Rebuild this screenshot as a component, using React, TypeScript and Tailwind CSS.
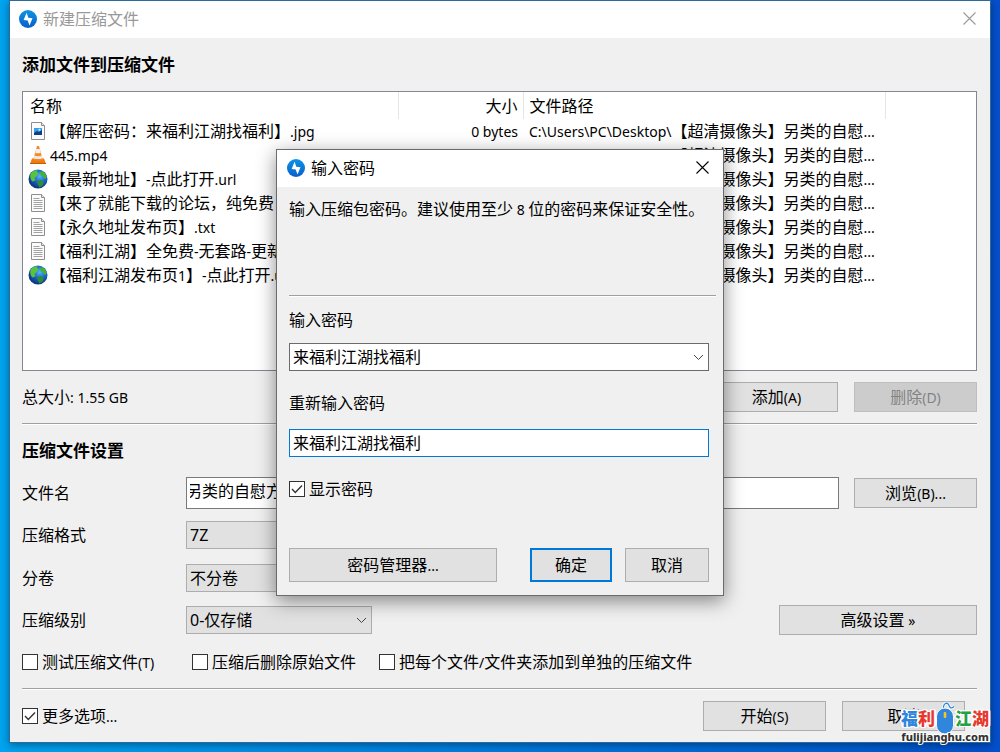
import { useState } from 'react';
import type { ButtonHTMLAttributes, ReactNode } from 'react';

type FileKind = 'image' | 'video' | 'web' | 'text';

const FILE_PATH = 'C:\\Users\\PC\\Desktop\\【超清摄像头】另类的自慰...';

const files: { kind: FileKind; name: string; size: string }[] = [
  { kind: 'image', name: '【解压密码：来福利江湖找福利】.jpg', size: '0 bytes' },
  { kind: 'video', name: '445.mp4', size: '' },
  { kind: 'web', name: '【最新地址】-点此打开.url', size: '' },
  { kind: 'text', name: '【来了就能下载的论坛，纯免费', size: '' },
  { kind: 'text', name: '【永久地址发布页】.txt', size: '' },
  { kind: 'text', name: '【福利江湖】全免费-无套路-更新', size: '' },
  { kind: 'web', name: '【福利江湖发布页1】-点此打开.url', size: '' },
];

// Latin runs are set a step smaller than the Chinese around them
function Label({ text }: { text: string }) {
  return (
    <>
      {text.split(/([\x20-\x7e»]+)/).map((part, i) =>
        i % 2 ? (
          <span key={i} className="text-sm leading-none whitespace-pre">{part}</span>
        ) : (
          part
        ),
      )}
    </>
  );
}

function AppIcon() {
  return (
    <svg viewBox="0 0 18 18" className="size-[18px] shrink-0" aria-hidden="true">
      <defs>
        <linearGradient id="disc" x1="0" y1="0" x2="0" y2="1">
          <stop offset="0" stopColor="#0c93e4" />
          <stop offset="1" stopColor="#0a5fcb" />
        </linearGradient>
      </defs>
      <circle cx="9" cy="9" r="9" fill="url(#disc)" />
      <path d="M7.600 2.800 9.300 7.800l4.200.4L10.500 15.400 8.700 10.400 4.600 9.900z" fill="#fff" />
    </svg>
  );
}

function CloseIcon() {
  return (
    <svg viewBox="0 0 13 13" className="size-[13px]" fill="none" stroke="currentColor" strokeWidth="1.1" aria-hidden="true">
      <path d="M.5.5l12 12M12.5.5l-12 12" />
    </svg>
  );
}

function PageIcon({ children }: { children: ReactNode }) {
  return (
    <svg viewBox="0 0 20 20" className="size-5" aria-hidden="true">
      <path d="M3.5 1.5h10l3 3v14h-13z" fill="#fbfbfb" stroke="#8e8e8e" />
      <path d="M13.5 1.5v3h3" fill="#e4e4e4" stroke="#8e8e8e" />
      {children}
    </svg>
  );
}

function FileIcon({ kind }: { kind: FileKind }) {
  if (kind === 'image') {
    return (
      <PageIcon>
        <path d="M6 7h8v7H6z" fill="#39a0e8" />
        <path d="M6 14v-2l3-2 2 1 3-2v5z" fill="#0b3f8c" />
        <circle cx="11.5" cy="8.8" r="1" fill="#d9f0ff" />
      </PageIcon>
    );
  }
  if (kind === 'text') {
    return (
      <PageIcon>
        <path d="M5.5 5.5h6M5.5 7.5h9M5.5 9.5h9M5.5 11.5h9M5.5 13.5h9M5.5 15.5h9" stroke="#a3a3a3" />
      </PageIcon>
    );
  }
  if (kind === 'video') {
    return (
      <svg viewBox="0 0 20 20" className="size-5" aria-hidden="true">
        <path d="M4 13.500h12l2 5.500H2z" fill="#f07a12" />
        <path d="M2 18h16v1H2z" fill="#c65a05" />
        <path d="M9 1h2l3.800 13.800c-2.400 1.500-7.200 1.500-9.600 0z" fill="#f58a1f" />
        <path d="M8.200 4h3.600l1 3.700c-1.500.7-4.100.7-5.600 0z" fill="#f0f0f0" />
        <path d="M6.400 10.500c2 1 5.200 1 7.200 0l.8 2.700c-2.200 1.200-6.600 1.200-8.800 0z" fill="#e9e9e9" />
      </svg>
    );
  }
  return (
    <svg viewBox="0 0 20 20" className="size-5" aria-hidden="true">
      <defs>
        <radialGradient id="sea" cx=".6" cy=".35" r=".7">
          <stop offset="0" stopColor="#58b4f8" />
          <stop offset=".5" stopColor="#1863c4" />
          <stop offset="1" stopColor="#0a2a72" />
        </radialGradient>
      </defs>
      <circle cx="10" cy="10" r="9.500" fill="url(#sea)" />
      <path d="M2.500 5C4.500 2 7 1 9.500 1.200L9 3l1.500 1.500L8.500 7 6.500 9l1 2-2.500 1.500C3.500 12.500 1.500 8 2.500 5z" fill="#58c43a" />
      <path d="M12 3.500l2.500-1.200c2.300 1.400 3.700 3.400 4.200 6L17 10.500l-1.500-3-2.500-.5z" fill="#45b52d" />
      <path d="M9 12l3.500-1 3.500 2-1.500 3.500-3 2-1.500-2.500z" fill="#2c8f34" />
    </svg>
  );
}

function PushButton({ text, className, ...rest }: { text: string; className: string } & ButtonHTMLAttributes<HTMLButtonElement>) {
  return (
    <button
      type="button"
      className={`flex shrink-0 items-center justify-center bg-[#e1e1e1] whitespace-nowrap disabled:border-[#bfbfbf] disabled:bg-[#cccccc] disabled:text-[#838383] ${className}`}
      {...rest}
    >
      <span><Label text={text} /></span>
    </button>
  );
}

function Divider({ className }: { className: string }) {
  return <hr className={`h-[2px] border-t border-b border-t-[#a0a0a0] border-b-white ${className}`} />;
}

function Checkbox({ text, defaultChecked }: { text: string; defaultChecked?: boolean }) {
  return (
    <label className="flex h-6 items-center gap-1 whitespace-nowrap">
      <span className="relative size-4 shrink-0">
        <input
          type="checkbox"
          defaultChecked={defaultChecked}
          className="peer block size-4 appearance-none border border-[#333333] bg-white"
        />
        <svg viewBox="0 0 16 16" className="pointer-events-none absolute inset-0 hidden size-4 peer-checked:block" fill="none" stroke="#333" strokeWidth="1.400" aria-hidden="true">
          <path d="M3 8l3.300 3.500L13 4.500" />
        </svg>
      </span>
      <span><Label text={text} /></span>
    </label>
  );
}

function Select({ id, value, className }: { id: string; value: string; className: string }) {
  return (
    <div className={`relative h-7 ${className}`}>
      <select id={id} className="block size-full appearance-none border border-inherit bg-inherit pr-6 pl-[3px] leading-6">
        <option>{value}</option>
      </select>
      <svg viewBox="0 0 11 7" className="pointer-events-none absolute top-[11px] right-[5px] h-[7px] w-[11px]" fill="none" stroke="#444" aria-hidden="true">
        <path d="M1 1l4.500 4.500L10 1" />
      </svg>
    </div>
  );
}

function FileTable() {
  return (
    <div className="mt-[14px] h-[280px] overflow-hidden border border-[#828790] bg-white">
      <table className="w-full table-fixed border-collapse text-left">
        <colgroup>
          <col className="w-[375px]" />
          <col className="w-[125px]" />
          <col className="w-[362px]" />
          <col />
        </colgroup>
        <thead>
          <tr className="h-[27px]">
            <th className="border-r border-[#e5e5e5] pl-[7px] font-normal">名称</th>
            <th className="border-r border-[#e5e5e5] pr-[5px] text-right font-normal">大小</th>
            <th className="border-r border-[#e5e5e5] pl-[6px] font-normal">文件路径</th>
            <th />
          </tr>
        </thead>
        <tbody>
          {files.map((file) => (
            <tr key={file.name} className="h-6 whitespace-nowrap">
              <td className="pl-[5px]">
                <div className="flex h-6 items-center gap-[2px]">
                  <FileIcon kind={file.kind} />
                  <span><Label text={file.name} /></span>
                </div>
              </td>
              <td className="pr-[5px] text-right"><Label text={file.size} /></td>
              <td className="pl-[6px]"><Label text={FILE_PATH} /></td>
              <td />
            </tr>
          ))}
        </tbody>
      </table>
    </div>
  );
}

function Watermark() {
  return (
    <div className="flex flex-col items-center">
      <div className="flex items-end text-[17px] leading-5 font-black [text-shadow:1px_1px_0_#fff,-1px_1px_0_#fff,1px_-1px_0_#fff,-1px_-1px_0_#fff,2px_0_0_#fff,-2px_0_0_#fff]">
        <span className="mb-[6px] bg-[#e1e1e1] text-[#2f86dc]">福</span>
        <span className="mb-[6px] text-[#e8392f]">利</span>
        <svg viewBox="0 0 20 34" className="h-[34px] w-5" aria-hidden="true">
          <path d="M9 9C7 3 12 .5 13.500 3.500s2 5 5.500 2" fill="none" stroke="#fff" strokeWidth="3" />
          <path d="M9 9C7 3 12 .5 13.500 3.500s2 5 5.500 2" fill="none" stroke="#2f86dc" strokeWidth="1.300" />
          <rect x="1.500" y="7" width="17" height="26" rx="8.500" fill="#2f86dc" stroke="#fff" />
          <rect x="8.700" y="11" width="2.600" height="6" rx="1" fill="#f5c518" />
        </svg>
        <span className="mb-[6px] text-[#27a045]">江</span>
        <span className="mb-[6px] text-[#e8392f]">湖</span>
      </div>
      <span className="-mt-1 text-[11px] leading-3 font-extrabold text-[#333333] [-webkit-text-stroke:2px_white] [paint-order:stroke_fill]">
        fulijianghu.com
      </span>
    </div>
  );
}

function PasswordDialog() {
  const [password, setPassword] = useState('来福利江湖找福利');

  return (
    <div className="absolute inset-0 flex items-start justify-center pt-[149px]">
      <section
        role="dialog"
        aria-labelledby="dialog-title"
        className="w-[448px] border border-[#6b6b6b] bg-[#f0f0f0] shadow-[0_5px_18px_rgba(0,0,0,0.45)]"
      >
        <header className="flex h-[37px] items-center bg-white pr-[14px] pb-[2px] pl-[10px]">
          <AppIcon />
          <h2 id="dialog-title" className="ml-[6px] flex-1">输入密码</h2>
          <button type="button" aria-label="关闭"><CloseIcon /></button>
        </header>
        <div className="pt-[10px] pr-[14px] pb-[13px] pl-3">
          <p className="whitespace-nowrap"><Label text="输入压缩包密码。建议使用至少 8 位的密码来保证安全性。" /></p>
          <Divider className="-mr-[7px] mt-[74px]" />
          <label htmlFor="password" className="mt-[11px] block">输入密码</label>
          <Select id="password" value="来福利江湖找福利" className="mt-[11px] border-[#6b6b6b] bg-white" />
          <label htmlFor="repeat" className="mt-5 block">重新输入密码</label>
          <input
            id="repeat"
            type="text"
            value={password}
            onChange={(e) => setPassword(e.target.value)}
            className="mt-[14px] block h-7 w-full border border-[#0078d7] bg-white px-[3px] pb-[2px] outline-none"
          />
          <div className="mt-5 flex">
            <Checkbox text="显示密码" defaultChecked />
          </div>
          <div className="mt-[47px] flex h-[34px]">
            <PushButton text="密码管理器..." className="w-[208px] border border-[#adadad]" />
            <PushButton text="确定" className="ml-auto w-[82px] border-2 border-[#0078d7]" />
            <PushButton text="取消" className="ml-[13px] w-[84px] border border-[#adadad]" />
          </div>
        </div>
      </section>
    </div>
  );
}

export default function App() {
  return (
    <div className="relative min-h-screen bg-linear-to-r from-[#00a4f0] to-[#0450cc] px-[9px] pb-[9px] font-['Noto_Sans','Noto_Sans_CJK_SC',sans-serif] text-base leading-6 text-black">
      <main className="border border-[#2b6a9e] bg-[#f0f0f0] shadow-[0_2px_8px_rgba(0,0,0,0.4)]">
        <header className="flex h-[37px] items-center bg-white pr-[14px] pb-[2px] pl-[9px] text-[#999999]">
          <AppIcon />
          <h1 className="ml-[6px] flex-1">新建压缩文件</h1>
          <button type="button" aria-label="关闭"><CloseIcon /></button>
        </header>

        <div className="pt-[15px] pr-[13px] pb-[11px] pl-3">
          <h2 className="text-[17px] leading-6 font-bold">添加文件到压缩文件</h2>
          <FileTable />
          <div className="mt-[11px] flex h-[30px] items-center gap-4">
            <span className="flex-1"><Label text="总大小: 1.55 GB" /></span>
            <PushButton text="添加(A)" className="h-full w-[123px] border border-[#adadad]" />
            <PushButton text="删除(D)" className="h-full w-[123px] border border-[#adadad]" disabled />
          </div>
          <Divider className="mt-[11px]" />

          <h2 className="mt-[14px] text-[17px] leading-6 font-bold">压缩文件设置</h2>
          <div className="mt-[14px] flex h-8 items-center">
            <label htmlFor="filename" className="w-[164px] shrink-0">文件名</label>
            <input
              id="filename"
              type="text"
              defaultValue="另类的自慰方"
              className="h-full min-w-0 flex-1 border border-[#7a7a7a] bg-white px-[3px] pb-[6px] indent-[-4px]"
            />
            <PushButton text="浏览(B)..." className="ml-[15px] h-[30px] w-[123px] border border-[#adadad]" />
          </div>
          <div className="mt-3 flex h-7 items-center">
            <label htmlFor="format" className="w-[164px] shrink-0">压缩格式</label>
            <Select id="format" value="7Z" className="w-[186px] border-[#adadad] bg-[#e1e1e1]" />
          </div>
          <div className="mt-[15px] flex h-7 items-center">
            <label htmlFor="volume" className="w-[164px] shrink-0">分卷</label>
            <Select id="volume" value="不分卷" className="w-[186px] border-[#adadad] bg-[#e1e1e1]" />
          </div>
          <div className="mt-[13px] flex h-[30px] items-center">
            <label htmlFor="level" className="w-[164px] shrink-0">压缩级别</label>
            <Select id="level" value="0-仅存储" className="w-[186px] border-[#adadad] bg-[#e1e1e1]" />
            <PushButton text="高级设置 »" className="ml-auto h-full w-[198px] border border-[#adadad]" />
          </div>
          <div className="mt-[15px] grid grid-cols-[170px_187px_auto] justify-start">
            <Checkbox text="测试压缩文件(T)" />
            <Checkbox text="压缩后删除原始文件" />
            <Checkbox text="把每个文件/文件夹添加到单独的压缩文件" />
          </div>
          <Divider className="mt-[14px]" />

          <div className="relative mt-[11px] flex h-[30px] items-center gap-4 pr-3">
            <div className="flex-1">
              <Checkbox text="更多选项..." defaultChecked />
            </div>
            <PushButton text="开始(S)" className="h-full w-[123px] border border-[#adadad]" />
            <PushButton text="取消" className="h-full w-[123px] border border-[#adadad]" />
            <div className="absolute -right-3 -bottom-3">
              <Watermark />
            </div>
          </div>
        </div>
      </main>
      <PasswordDialog />
    </div>
  );
}
